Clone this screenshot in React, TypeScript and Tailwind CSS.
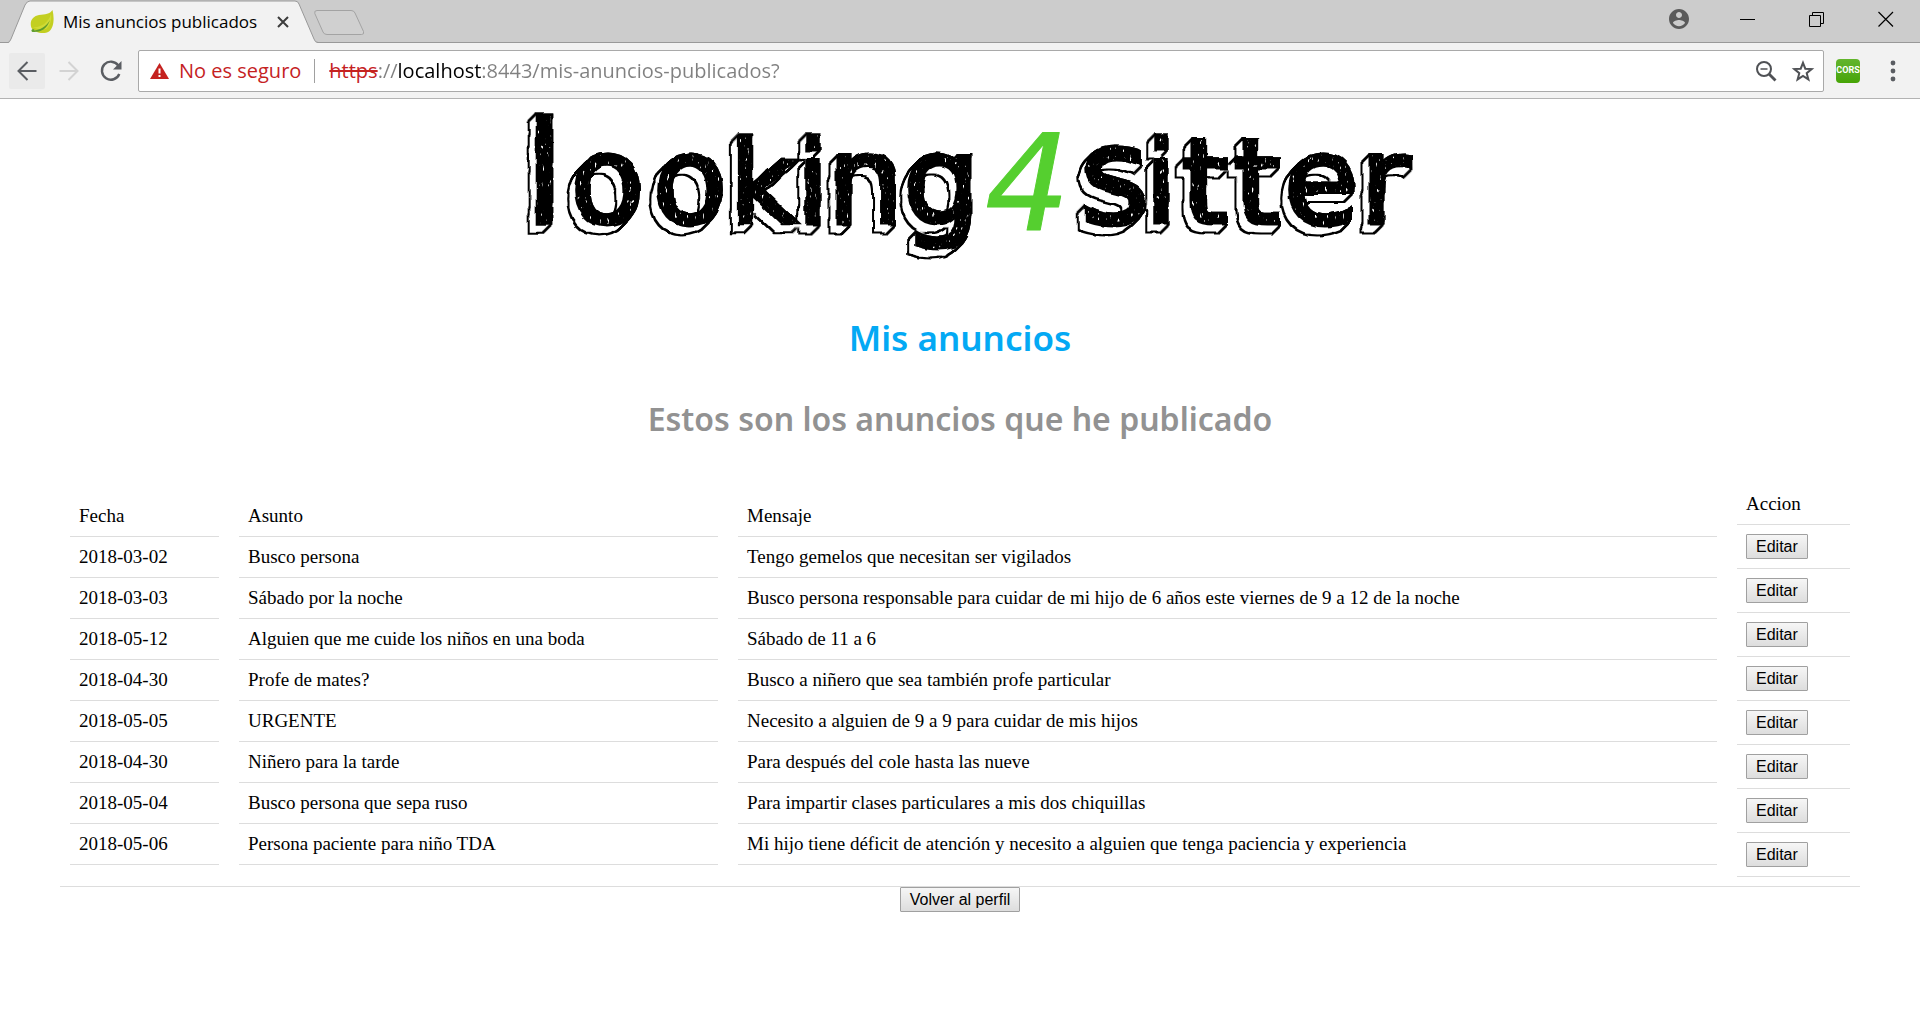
import React from "react";

type Ad = { date: string; subject: string; message: string };

const ads: Ad[] = [
  { date: "2018-03-02", subject: "Busco persona", message: "Tengo gemelos que necesitan ser vigilados" },
  {
    date: "2018-03-03",
    subject: "Sábado por la noche",
    message: "Busco persona responsable para cuidar de mi hijo de 6 años este viernes de 9 a 12 de la noche",
  },
  { date: "2018-05-12", subject: "Alguien que me cuide los niños en una boda", message: "Sábado de 11 a 6" },
  { date: "2018-04-30", subject: "Profe de mates?", message: "Busco a niñero que sea también profe particular" },
  { date: "2018-05-05", subject: "URGENTE", message: "Necesito a alguien de 9 a 9 para cuidar de mis hijos" },
  { date: "2018-04-30", subject: "Niñero para la tarde", message: "Para después del cole hasta las nueve" },
  { date: "2018-05-04", subject: "Busco persona que sepa ruso", message: "Para impartir clases particulares a mis dos chiquillas" },
  {
    date: "2018-05-06",
    subject: "Persona paciente para niño TDA",
    message: "Mi hijo tiene déficit de atención y necesito a alguien que tenga paciencia y experiencia",
  },
];

function Tab() {
  return (
    <div className="relative ml-2 flex h-[43px] w-[310px] items-center pl-[22px]">
      <svg className="absolute inset-0 h-full w-full" viewBox="0 0 310 43" aria-hidden="true">
        <path d="M0 43 Q2 42 3 39 L17 5 Q19 1 22 1 H287 Q290 1 291 4 L306 39 Q307 42 310 43 Z" fill="#f2f2f2" />
        <path
          d="M0 42.5 Q1.500 42.500 3 39 L17 5 Q19 1 22 1 H287 Q290 1 291 4 L306 39 Q307 42.500 310 42.500"
          fill="none"
          stroke="#999"
        />
      </svg>
      <svg className="relative h-6 w-6" viewBox="0 0 24 24" aria-hidden="true">
        <path d="M22.500 0 C24.500 8 24 18 19 21.500 C13 25 4 22 1.500 18 C-1 11 3 6 9 5 C15 4.500 20 4 22.500 0 Z" fill="#c3cf21" />
        <path d="M21 4 C22 10 20 16 16 19 C11 20 6 19 3 17 C9 18 18 14 21 4 Z" fill="#d0da35" />
        <path d="M2 21 C10 20 16 17 20 10 C17 19 11 22 4 22 Z" fill="#5f9c2c" />
        <circle cx="3" cy="20.500" r="1.500" fill="#5f9c2c" />
      </svg>
      <span className="relative ml-[9px] font-['Open_Sans',sans-serif] text-[17px] leading-6 text-black">
        Mis anuncios publicados
      </span>
      <button type="button" aria-label="Cerrar pestaña" className="relative ml-[18px] flex h-4 w-4 items-center justify-center">
        <svg className="h-3 w-3" viewBox="0 0 12 12" stroke="#3c3c3c" strokeWidth="2" aria-hidden="true">
          <path d="M1 1 L11 11 M11 1 L1 11" />
        </svg>
      </button>
    </div>
  );
}

function WindowButton({ label, children }: { label: string; children: React.ReactNode }) {
  return (
    <button type="button" aria-label={label} className="flex w-[69px] items-center justify-center">
      {children}
    </button>
  );
}

function TitleBar() {
  return (
    <header className="flex h-[43px] border-b border-[#999] bg-[#cccccc]">
      <Tab />
      <button type="button" aria-label="Nueva pestaña" className="-ml-1 mt-2.5 h-[26px] w-[52px]">
        <svg viewBox="0 0 52 26" className="h-full w-full" aria-hidden="true">
          <path
            d="M3 .5 H37 Q40 .5 41 3 L49.500 21.500 Q50.500 24.500 47.500 24.500 H13 Q10 24.500 9 22 L.8 3.500 Q0 .5 3 .5 Z"
            fill="#d0d0d0"
            stroke="#a3a3a3"
          />
        </svg>
      </button>
      <div className="ml-auto flex pb-1">
        <WindowButton label="Usuario">
          <svg className="h-6 w-6" viewBox="0 0 24 24" fill="#5a5a5a" aria-hidden="true">
            <path d="M12 2C6.480 2 2 6.480 2 12s4.480 10 10 10 10-4.480 10-10S17.520 2 12 2zm0 3c1.660 0 3 1.340 3 3s-1.340 3-3 3-3-1.340-3-3 1.340-3 3-3zm0 14.200c-2.500 0-4.710-1.280-6-3.220.030-1.990 4-3.080 6-3.080 1.990 0 5.970 1.090 6 3.080-1.290 1.940-3.500 3.220-6 3.220z" />
          </svg>
        </WindowButton>
        <WindowButton label="Minimizar">
          <svg className="h-4 w-4" viewBox="0 0 16 16" stroke="#000" aria-hidden="true">
            <path d="M0 8.500 H15" />
          </svg>
        </WindowButton>
        <WindowButton label="Restaurar">
          <svg className="h-4 w-4" viewBox="0 0 16 16" fill="none" stroke="#000" aria-hidden="true">
            <path d="M.5 4.500 H11.500 V15.500 H.5 Z M3.500 4.500 V1.500 H14.500 V12.500 H11.500" />
          </svg>
        </WindowButton>
        <WindowButton label="Cerrar">
          <svg className="h-4 w-4" viewBox="0 0 16 16" stroke="#000" strokeWidth="1.200" aria-hidden="true">
            <path d="M.5 1 L15 15.500 M15 1 L.5 15.500" />
          </svg>
        </WindowButton>
      </div>
    </header>
  );
}

function Toolbar() {
  return (
    <div className="flex h-14 items-center border-b border-[#b3b3b3] bg-[#f2f2f2] pl-[9px] pr-4">
      <button type="button" aria-label="Atrás" className="flex h-9 w-9 items-center justify-center rounded-xs bg-[#eaeaea]">
        <svg className="h-5 w-5" viewBox="0 0 20 20" fill="none" stroke="#5a5d62" strokeWidth="2" aria-hidden="true">
          <path d="M19.500 10 H2 M10.500 1 L1.500 10 L10.500 19" />
        </svg>
      </button>
      <button type="button" aria-label="Adelante" className="ml-1.5 flex h-9 w-9 items-center justify-center">
        <svg className="h-5 w-5" viewBox="0 0 20 20" fill="none" stroke="#d3d3d3" strokeWidth="2" aria-hidden="true">
          <path d="M.5 10 H18 M9.500 1 L18.500 10 L9.500 19" />
        </svg>
      </button>
      <button type="button" aria-label="Recargar" className="ml-1.5 flex h-9 w-9 items-center justify-center">
        <svg className="h-[22px] w-[22px]" viewBox="0 0 22 22" fill="none" stroke="#5a5d62" strokeWidth="2.400" aria-hidden="true">
          <path d="M18.300 5.500 A9 9 0 1 0 19.300 14" />
          <path d="M21.500 1 V9.500 H13 Z" fill="#5a5d62" stroke="none" />
        </svg>
      </button>

      <div className="ml-[9px] flex h-[42px] flex-1 items-center rounded-xs border border-[#a9a9a9] bg-white pl-[11px] pr-2 font-['Open_Sans',sans-serif] text-[20px] leading-7">
        <svg className="h-4 w-[19px]" viewBox="0 0 19 16" aria-hidden="true">
          <path d="M9.500 0 L19 16 H0 Z" fill="#c5221f" />
          <path d="M8.500 5.500 H10.500 V10.500 H8.500 Z M8.500 12 H10.500 V14 H8.500 Z" fill="#fff" />
        </svg>
        <span className="ml-2.5 text-[#c5221f]">No es seguro</span>
        <span className="ml-[13px] h-6 w-px bg-[#a0a0a0]" />
        <label htmlFor="url" className="ml-3.5 text-[#c5221f] line-through decoration-2">
          https
        </label>
        <input
          id="url"
          type="text"
          defaultValue="://localhost:8443/mis-anuncios-publicados?"
          className="min-w-0 flex-1 bg-[linear-gradient(to_right,#808080_20px,#000000_20px,#000000_104px,#808080_104px)] bg-clip-text p-0 text-transparent caret-black outline-none"
        />
        <button type="button" aria-label="Zoom" className="ml-3">
          <svg className="h-[22px] w-[22px]" viewBox="0 0 22 22" fill="none" stroke="#4f5155" strokeWidth="2" aria-hidden="true">
            <circle cx="9" cy="9" r="7" />
            <path d="M14 14 L20.500 20.500" strokeWidth="2.800" />
            <path d="M5.500 9 H12.500" strokeWidth="1.500" />
          </svg>
        </button>
        <button type="button" aria-label="Añadir a favoritos" className="ml-3.5">
          <svg className="h-6 w-6" viewBox="0 0 24 24" fill="none" stroke="#4f5155" strokeWidth="2" aria-hidden="true">
            <path d="M12 3.800 L14.300 9.700 L20.700 10.100 L15.700 14.200 L17.400 20.400 L12 16.900 L6.600 20.400 L8.300 14.200 L3.300 10.100 L9.700 9.700 Z" />
          </svg>
        </button>
      </div>

      <button
        type="button"
        className="ml-3 flex h-6 w-6 items-center justify-center rounded bg-linear-to-b from-[#63b52c] to-[#46a404] font-['Roboto',sans-serif] text-[9px] font-bold text-white"
      >
        CORS
      </button>
      <button type="button" aria-label="Menú" className="ml-[22px] flex h-9 w-[22px] items-center justify-center">
        <svg className="h-6 w-1.5" viewBox="0 0 6 24" fill="#5a5d62" aria-hidden="true">
          <circle cx="3" cy="4" r="2.400" />
          <circle cx="3" cy="12" r="2.400" />
          <circle cx="3" cy="20" r="2.400" />
        </svg>
      </button>
    </div>
  );
}

function Logo() {
  return (
    <svg viewBox="500 99 920 170" className="mx-auto block h-auto w-[920px] max-w-full overflow-visible" role="img" aria-label="looking4sitter">
      <defs>
        {/* Wobbly face, extruded down and to the left, with pencil scribbles left blank on the face. */}
        <filter id="sketch" filterUnits="userSpaceOnUse" x="500" y="99" width="920" height="170" colorInterpolationFilters="sRGB">
          <feTurbulence type="fractalNoise" baseFrequency="0.06" numOctaves="2" seed="4" result="wobble" />
          <feDisplacementMap in="SourceAlpha" in2="wobble" scale="5" xChannelSelector="R" yChannelSelector="G" result="face" />
          <feOffset in="face" dx="-1" dy="1" result="o1" />
          <feMerge result="e1">
            <feMergeNode in="face" />
            <feMergeNode in="o1" />
          </feMerge>
          <feOffset in="e1" dx="-2" dy="2" result="o2" />
          <feMerge result="e2">
            <feMergeNode in="e1" />
            <feMergeNode in="o2" />
          </feMerge>
          <feOffset in="e2" dx="-4" dy="4" result="o3" />
          <feMerge result="e3">
            <feMergeNode in="e2" />
            <feMergeNode in="o3" />
          </feMerge>
          <feOffset in="e3" dx="-1" dy="2" result="o4" />
          <feMerge result="e4">
            <feMergeNode in="e3" />
            <feMergeNode in="o4" />
          </feMerge>
          <feMorphology in="e4" operator="erode" radius="2" result="core" />
          <feFlood floodColor="#fff" result="white" />
          <feComposite in="white" in2="core" operator="in" result="side" />
          <feTurbulence type="fractalNoise" baseFrequency="0.4 0.16" numOctaves="2" seed="9" />
          <feColorMatrix values="0 0 0 0 1  0 0 0 0 1  0 0 0 0 1  9 0 0 0 -6.100" result="specks" />
          <feMorphology in="face" operator="erode" radius="2" result="inner" />
          <feComposite in="specks" in2="inner" operator="in" result="scribble" />
          <feMerge>
            <feMergeNode in="e4" />
            <feMergeNode in="side" />
            <feMergeNode in="face" />
            <feMergeNode in="scribble" />
          </feMerge>
        </filter>
      </defs>
      <g fontFamily="'DejaVu Sans', sans-serif" fontWeight="400">
        <text y="223" filter="url(#sketch)" fontSize="121" stroke="#000" strokeWidth="5">
          <tspan x="525" fontSize="140">l</tspan>
          <tspan x="570 653">oo</tspan>
          <tspan x="730" fontSize="114">k</tspan>
          <tspan x="797" fontSize="114">i</tspan>
          <tspan x="827">n</tspan>
          <tspan x="903">g</tspan>
          <tspan x="1080" fontSize="134">s</tspan>
          <tspan x="1145" fontSize="114">i</tspan>
          <tspan x="1182 1234" fontSize="118">tt</tspan>
          <tspan x="1284 1360">er</tspan>
        </text>
        <text
          x="985"
          y="230"
          fontStyle="italic"
          fontSize="134"
          fill="#55cf2f"
          stroke="#55cf2f"
          strokeWidth="1"
          strokeLinejoin="round"
        >
          4
        </text>
      </g>
    </svg>
  );
}

const greyButton =
  "h-[25px] rounded-[1px] border border-[#a0a0a0] bg-linear-to-b from-[#f6f6f6] to-[#dddddd] px-[9px] pt-px font-['Liberation_Sans',Arial,sans-serif] text-[16px] leading-[22px] text-black";

function Column({ title, rows }: { title: string; rows: React.ReactNode[] }) {
  return (
    <div className="px-2.5">
      <table className="w-full">
        <thead>
          <tr className="border-b border-[#dddddd]">
            <th scope="col" className="h-10 px-[9px] text-left font-normal">
              {title}
            </th>
          </tr>
        </thead>
        <tbody>
          {rows.map((row, i) => (
            <tr key={i} className="border-b border-[#dddddd]">
              <td className="h-[41px] px-[9px] py-[9px]">{row}</td>
            </tr>
          ))}
        </tbody>
      </table>
    </div>
  );
}

export default function App() {
  return (
    <div className="min-h-screen bg-white">
      <TitleBar />
      <Toolbar />
      <main>
        <Logo />
        <h1 className="mt-[45px] text-center font-['Noto_Sans',sans-serif] text-[35px] font-semibold leading-[48px] text-[#03a9f4]">
          Mis anuncios
        </h1>
        <h2 className="mt-[35px] text-center font-['Noto_Sans',sans-serif] text-[32px] font-semibold leading-[44px] text-[#929292]">
          Estos son los anuncios que he publicado
        </h2>
        <section className="mx-[60px] mt-[33px] grid grid-cols-[169fr_499fr_999fr_133fr] items-center border-b border-[#dddddd] pb-[9px] pt-2.5 font-['Liberation_Serif',serif] text-[19px] leading-[22px] text-black">
          <Column title="Fecha" rows={ads.map((ad) => ad.date)} />
          <Column title="Asunto" rows={ads.map((ad) => ad.subject)} />
          <Column title="Mensaje" rows={ads.map((ad) => ad.message)} />
          <Column
            title="Accion"
            rows={ads.map((ad) => (
              <button type="button" className={`${greyButton} block`} aria-label={`Editar ${ad.subject}`}>
                Editar
              </button>
            ))}
          />
        </section>
        <div className="flex justify-center">
          <button type="button" className={greyButton}>
            Volver al perfil
          </button>
        </div>
      </main>
    </div>
  );
}
